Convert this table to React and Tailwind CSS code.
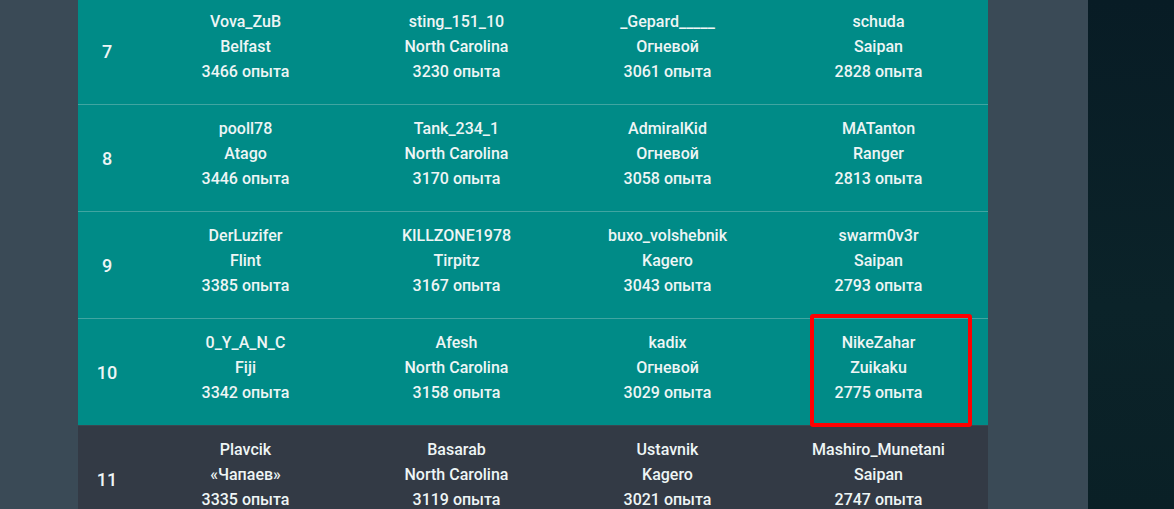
import React from "react";

const rows = [
  { n: 7, teal: true, cells: [["Vova_ZuB","Belfast","3466"],["sting_151_10","North Carolina","3230"],["_Gepard_____","Огневой","3061"],["schuda","Saipan","2828"]] },
  { n: 8, teal: true, cells: [["pooll78","Atago","3446"],["Tank_234_1","North Carolina","3170"],["AdmiralKid","Огневой","3058"],["MATanton","Ranger","2813"]] },
  { n: 9, teal: true, cells: [["DerLuzifer","Flint","3385"],["KILLZONE1978","Tirpitz","3167"],["buxo_volshebnik","Kagero","3043"],["swarm0v3r","Saipan","2793"]] },
  { n: 10, teal: true, cells: [["0_Y_A_N_C","Fiji","3342"],["Afesh","North Carolina","3158"],["kadix","Огневой","3029"],["NikeZahar","Zuikaku","2775"]], mark: true },
  { n: 11, teal: false, cells: [["Plavcik","«Чапаев»","3335"],["Basarab","North Carolina","3119"],["Ustavnik","Kagero","3021"],["Mashiro_Munetani","Saipan","2747"]] },
];

export default function App() {
  return (
    <div className="flex h-[509px] w-[1174px] overflow-hidden bg-[#3a4a56]" style={{ fontFamily: "Roboto, 'Noto Sans', sans-serif" }}>
      <div className="w-[78px] shrink-0 bg-[#3a4a56]" />
      <div className="w-[910px] shrink-0 mt-[-2px] text-[#eef5f5] font-medium">
        {rows.map((r, i) => (
          <div
            key={r.n}
            className={
              "flex h-[107px] " +
              (r.teal ? "bg-[#008b87] " : "bg-[#333a45] ") +
              (r.teal && i < 3 ? "border-b border-[#40a5a1]" : "border-b border-[#3b4650]")
            }
          >
            <div className="w-[62px] shrink-0 flex items-center justify-center text-[18px] pr-[4px]">{r.n}</div>
            {r.cells.map((c, j) => (
              <div key={j} className="relative w-[211px] shrink-0 flex flex-col items-center pt-[11px] text-[16px] leading-[25px]">
                <div>{c[0]}</div>
                <div>{c[1]}</div>
                <div>{c[2]} опыта</div>
                {r.mark && j === 3 && (
                  <div className="absolute left-[37px] top-[-5px] w-[162px] h-[113px] border-[4px] border-[#ff0000] rounded-[3px]" />
                )}
              </div>
            ))}
          </div>
        ))}
      </div>
      <div className="w-[100px] shrink-0 bg-[#3a4a56]" />
      <div className="flex-1 bg-[linear-gradient(180deg,#081c25,#0b2329_60%,#0a2026)]" />
    </div>
  );
}
